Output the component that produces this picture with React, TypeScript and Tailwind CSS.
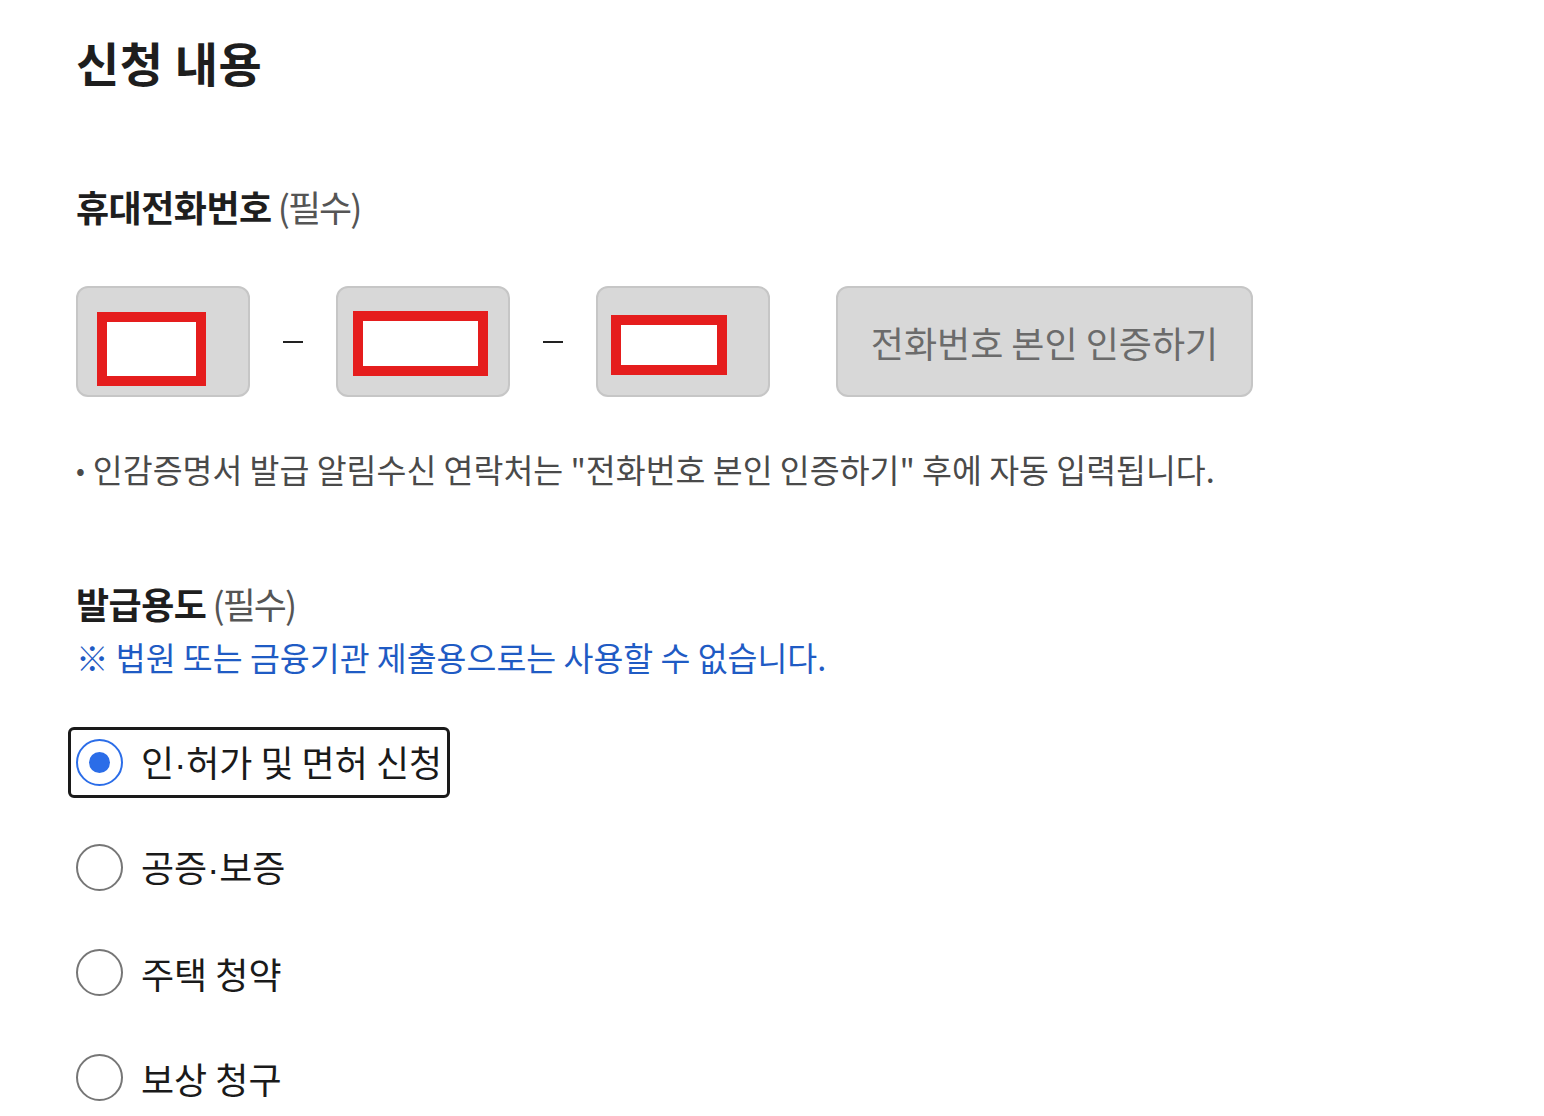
import { useState } from "react";

const options = [
  ["인", "허가 및 면허 신청"],
  ["공증", "보증"],
  ["주택 청약"],
  ["보상 청구"],
];

function PhoneBox({ pad, inner }: { pad: string; inner: string }) {
  return (
    <div className={`w-[174px] h-[111px] rounded-[12px] bg-[#d8d8d8] border-2 border-[#c6c6c6] ${pad}`}>
      <div className={`${inner} bg-white border-[10px] border-[#e51d1d]`} />
    </div>
  );
}

function Dash() {
  return (
    <span className="w-[86px] flex justify-center">
      <span className="block w-[20px] h-[2px] bg-[#222222]" />
    </span>
  );
}

function Required() {
  return <span className="ml-[6px] font-normal text-[#555555] tracking-[-2px]">(필수)</span>;
}

export default function App() {
  const [selected, setSelected] = useState(0);

  return (
    <div
      className="min-h-screen bg-white pl-[76px] pt-[30px] text-[#1e1e1e]"
      style={{ fontFamily: '"Noto Sans CJK KR", "Noto Sans", sans-serif' }}
    >
      {/* 제목 */}
      <h1 className="text-[47px] font-bold leading-[64px] tracking-[0.5px]">신청 내용</h1>

      {/* 휴대전화번호 */}
      <div className="mt-[90px]">
        <h2 className="text-[36px] font-bold leading-[44px] tracking-[-0.5px]">
          휴대전화번호
          <Required />
        </h2>

        <div className="mt-[58px] flex items-center">
          <PhoneBox pad="pl-[19px] pt-[24px]" inner="w-[109px] h-[74px]" />
          <Dash />
          <PhoneBox pad="pl-[15px] pt-[23px]" inner="w-[135px] h-[65px]" />
          <Dash />
          <PhoneBox pad="pl-[13px] pt-[27px]" inner="w-[116px] h-[60px]" />
          <button className="ml-[66px] w-[417px] h-[111px] rounded-[12px] bg-[#d8d8d8] border-2 border-[#c6c6c6] text-[36px] text-[#6b6b6b]">
            전화번호 본인 인증하기
          </button>
        </div>

        <p className="mt-[52px] text-[32.5px] leading-[40px] text-[#4a4a4a] flex items-center">
          <span className="mr-[8px] text-[26px]">•</span>
          인감증명서 발급 알림수신 연락처는 "전화번호 본인 인증하기" 후에 자동 입력됩니다.
        </p>
      </div>

      {/* 발급용도 */}
      <div className="mt-[92px]">
        <h2 className="text-[36px] font-bold leading-[44px] tracking-[-0.5px]">
          발급용도
          <Required />
        </h2>
        <p className="mt-[12px] text-[32.5px] leading-[40px] text-[#1f5bc4]">
          ※ 법원 또는 금융기관 제출용으로는 사용할 수 없습니다.
        </p>

        <div className="mt-[50px] flex flex-col gap-[34px]">
          {options.map((parts, i) => {
            const on = selected === i;
            return (
              <label
                key={i}
                onClick={() => setSelected(i)}
                className={`-ml-[8px] w-fit h-[71px] pl-[5px] pr-[5px] flex items-center gap-[18px] rounded-[6px] border-[3px] cursor-pointer ${
                  on ? "border-[#1a1a1a]" : "border-transparent"
                }`}
              >
                <span
                  className={`w-[47px] h-[47px] rounded-full border-2 flex items-center justify-center bg-white ${
                    on ? "border-[#2b6de8]" : "border-[#767676]"
                  }`}
                >
                  {on && <span className="w-[21px] h-[21px] rounded-full bg-[#2b6de8]" />}
                </span>
                <span className="text-[36px] leading-[44px] text-[#1a1a1a]">
                  {parts[0]}
                  {parts[1] && (
                    <>
                      <span style={{ fontFamily: '"Liberation Sans", sans-serif' }}>·</span>
                      {parts[1]}
                    </>
                  )}
                </span>
              </label>
            );
          })}
        </div>
      </div>
    </div>
  );
}
